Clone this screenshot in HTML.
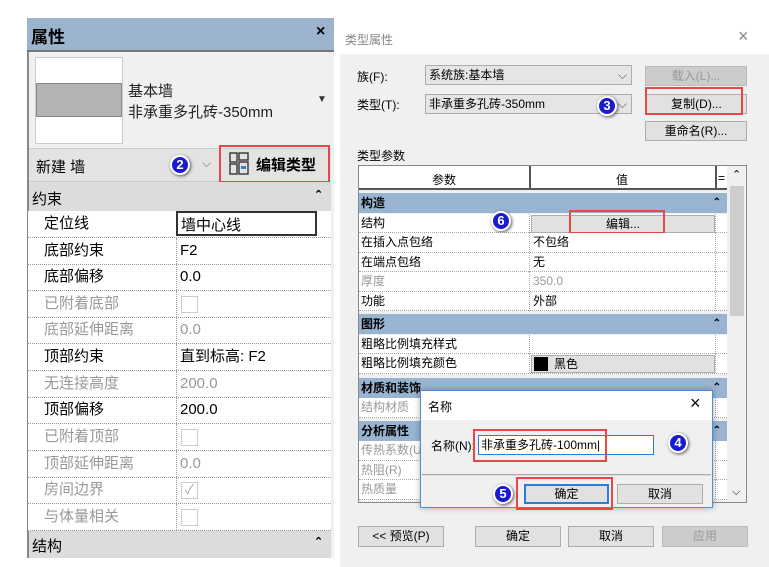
<!DOCTYPE html>
<html><head><meta charset="utf-8"><style>
*{margin:0;padding:0;box-sizing:border-box}
body{width:769px;height:567px;background:#fff;position:relative;overflow:hidden;font-family:"Liberation Sans","Microsoft YaHei","Noto Sans CJK SC",sans-serif;font-size:12px;color:#000}
.a{position:absolute}
.t{position:absolute;white-space:nowrap}
.circ{position:absolute;width:20px;height:20px;border-radius:50%;background:#1a1ad0;border:2px solid #fff;box-shadow:1px 1px 3px #555;color:#fff;font-weight:bold;font-size:13px;text-align:center;line-height:16px}
.red{position:absolute;border:2px solid #e8474a}
.btn{position:absolute;background:#e1e1e1;border:1px solid #adadad;text-align:center;font-size:12px;line-height:18px}
.lrow{position:absolute;left:28px;width:303px;height:27px;border-bottom:1px dotted #999;font-size:15px;line-height:26px}
.lrow .k{position:absolute;left:16px}
.lrow .v{position:absolute;left:148px;border-left:1px dotted #999;height:26px;padding-left:3px;width:141px}
.lrow.g{color:#999}
.cb{position:absolute;left:4px;top:5px;width:17px;height:17px;border:1px solid #ccc;background:#fff}
.trow{position:absolute;left:359px;width:368px;height:19.5px;background:#fff;border-bottom:1px dotted #aaa;font-size:12px;line-height:19px}
.trow .k{position:absolute;left:2px}
.trow .v{position:absolute;left:170px;width:187px;height:19px;border-left:1px dotted #aaa;border-right:1px dotted #aaa;padding-left:3px}
.trow.g{color:#999}
.hdr{position:absolute;left:359px;width:368px;height:20px;background:#99b4d1;font-weight:bold;font-size:12px;line-height:20px;padding-left:2px}
.hdr span{position:absolute;right:6px;font-size:10px}
</style></head><body>

<!-- LEFT PANEL -->
<div class="a" style="left:27px;top:18px;width:307px;height:540px;background:#f0f0f0;border-left:2px solid #888"></div>
<div class="a" style="left:27px;top:18px;width:307px;height:32px;background:#9bb3cd"></div>
<div class="t" style="left:31px;top:23px;font-size:17px;font-weight:bold">属性</div>
<div class="t" style="left:316px;top:23px;font-size:16px;font-weight:bold">×</div>
<div class="a" style="left:27px;top:50px;width:307px;height:2px;background:#777"></div>
<div class="a" style="left:35px;top:57px;width:88px;height:87px;background:#fff;border:1px solid #ccc"></div>
<div class="a" style="left:36px;top:83px;width:86px;height:34px;background:#b4b4b4;border:1px solid #888"></div>
<div class="t" style="left:128px;top:80px;font-size:15px;color:#222">基本墙</div>
<div class="t" style="left:128px;top:101px;font-size:15px;color:#222">非承重多孔砖-350mm</div>
<div class="t" style="left:317px;top:94px;font-size:10px;color:#333">▼</div>
<div class="a" style="left:29px;top:148px;width:302px;height:34px;background:#e3e3e3;border-top:1px solid #ccc;border-bottom:1px solid #ccc"></div>
<div class="t" style="left:36px;top:156px;font-size:15px">新建 墙</div>
<div class="circ" style="left:170px;top:155px">2</div>
<div class="t" style="left:202px;top:156px;font-size:12px;color:#777">⌵</div>
<div class="red" style="left:219px;top:145px;width:111px;height:38px"></div>
<svg class="a" style="left:229px;top:152px" width="22" height="24" viewBox="0 0 22 24"><rect x="1" y="1" width="7" height="9" fill="none" stroke="#333" stroke-width="1.4"/><rect x="1" y="12" width="7" height="10" fill="none" stroke="#333" stroke-width="1.4"/><rect x="10" y="1" width="9" height="7" fill="none" stroke="#333" stroke-width="1.4"/><rect x="10" y="10" width="9" height="12" fill="none" stroke="#333" stroke-width="1.4"/><rect x="12" y="14" width="5" height="3" fill="#3a7bd5"/></svg>
<div class="t" style="left:256px;top:154px;font-size:15px;font-weight:bold">编辑类型</div>
<div class="a" style="left:29px;top:182px;width:302px;height:29px;background:#dcdcdc"></div>
<div class="t" style="left:32px;top:188px;font-size:15px">约束</div>
<div class="t" style="left:314px;top:188px;font-size:11px;font-weight:bold">⌃</div>

<div class="a" style="left:28px;top:211px;width:303px;height:319px;background:#fff"></div>
<div class="lrow" style="top:211px"><span class="k">定位线</span><span class="v" style="border:2px solid #333;height:25px">墙中心线</span></div>
<div class="lrow" style="top:238px"><span class="k">底部约束</span><span class="v">F2</span></div>
<div class="lrow" style="top:264px"><span class="k">底部偏移</span><span class="v">0.0</span></div>
<div class="lrow g" style="top:291px"><span class="k">已附着底部</span><span class="v"><i class="cb"></i></span></div>
<div class="lrow g" style="top:317px"><span class="k">底部延伸距离</span><span class="v">0.0</span></div>
<div class="lrow" style="top:344px"><span class="k">顶部约束</span><span class="v">直到标高: F2</span></div>
<div class="lrow g" style="top:371px"><span class="k">无连接高度</span><span class="v">200.0</span></div>
<div class="lrow" style="top:397px"><span class="k">顶部偏移</span><span class="v">200.0</span></div>
<div class="lrow g" style="top:424px"><span class="k">已附着顶部</span><span class="v"><i class="cb"></i></span></div>
<div class="lrow g" style="top:451px"><span class="k">顶部延伸距离</span><span class="v">0.0</span></div>
<div class="lrow g" style="top:477px"><span class="k">房间边界</span><span class="v"><i class="cb" style="color:#aaa;font-style:normal;font-size:13px;line-height:14px;text-align:center">✓</i></span></div>
<div class="lrow g" style="top:504px"><span class="k">与体量相关</span><span class="v"><i class="cb"></i></span></div>
<div class="a" style="left:29px;top:531px;width:302px;height:27px;background:#dcdcdc"></div>
<div class="t" style="left:32px;top:535px;font-size:15px">结构</div>
<div class="t" style="left:314px;top:535px;font-size:11px;font-weight:bold">⌃</div>

<!-- RIGHT DIALOG -->
<div class="a" style="left:340px;top:54px;width:429px;height:513px;background:#f0f0f0"></div>
<div class="t" style="left:345px;top:31px;font-size:12px;color:#888">类型属性</div>
<div class="t" style="left:738px;top:26px;font-size:18px;color:#888">×</div>
<div class="t" style="left:357px;top:68px">族(F):</div>
<div class="a" style="left:425px;top:65px;width:207px;height:20px;background:#e5e5e5;border:1px solid #adadad;padding-left:3px;line-height:18px">系统族:基本墙<span style="position:absolute;right:4px;color:#555">⌵</span></div>
<div class="btn" style="left:645px;top:66px;width:102px;height:20px;color:#999;background:#ccc;border-color:#bbb">载入(L)...</div>
<div class="t" style="left:357px;top:96px">类型(T):</div>
<div class="a" style="left:425px;top:94px;width:207px;height:20px;background:#e5e5e5;border:1px solid #adadad;padding-left:3px;line-height:18px">非承重多孔砖-350mm<span style="position:absolute;right:4px;color:#555">⌵</span></div>
<div class="circ" style="left:597px;top:96px">3</div>
<div class="btn" style="left:646px;top:94px;width:101px;height:20px">复制(D)...</div>
<div class="red" style="left:645px;top:87px;width:98px;height:28px"></div>
<div class="btn" style="left:645px;top:121px;width:102px;height:20px">重命名(R)...</div>
<div class="t" style="left:357px;top:147px">类型参数</div>

<div class="a" style="left:358px;top:165px;width:389px;height:338px;border:1px solid #888;background:#f0f0f0"></div>
<div class="a" style="left:359px;top:166px;width:368px;height:24px;background:#fff;border-bottom:2px solid #555"></div>
<div class="a" style="left:529px;top:166px;width:2px;height:24px;background:#555"></div>
<div class="a" style="left:715px;top:166px;width:2px;height:24px;background:#555"></div>
<div class="t" style="left:432px;top:171px">参数</div>
<div class="t" style="left:616px;top:171px">值</div>
<div class="t" style="left:718px;top:171px">=</div>
<div class="a" style="left:728px;top:166px;width:18px;height:336px;background:#f0f0f0"></div>
<div class="a" style="left:730px;top:186px;width:14px;height:130px;background:#cdcdcd"></div>
<div class="t" style="left:732px;top:168px;font-size:11px">⌃</div>
<div class="t" style="left:732px;top:486px;font-size:11px">⌵</div>

<div class="hdr" style="top:193px">构造<span>⌃</span></div>
<div class="trow" style="top:213.5px"><span class="k">结构</span><span class="v"></span></div>
<div class="btn" style="left:531px;top:215px;width:184px;height:18px;line-height:16px">编辑...</div>
<div class="red" style="left:569px;top:210px;width:96px;height:24px"></div>
<div class="circ" style="left:491px;top:211px">6</div>
<div class="trow" style="top:233px"><span class="k">在插入点包络</span><span class="v">不包络</span></div>
<div class="trow" style="top:252.5px"><span class="k">在端点包络</span><span class="v">无</span></div>
<div class="trow g" style="top:272px"><span class="k">厚度</span><span class="v">350.0</span></div>
<div class="trow" style="top:291.5px"><span class="k">功能</span><span class="v">外部</span></div>
<div class="hdr" style="top:314px">图形<span>⌃</span></div>
<div class="trow" style="top:334.5px"><span class="k">粗略比例填充样式</span><span class="v"></span></div>
<div class="trow" style="top:354px"><span class="k">粗略比例填充颜色</span><span class="v"></span></div>
<div class="btn" style="left:531px;top:355px;width:184px;height:18px;text-align:left;line-height:16px;padding-left:22px">黑色<i style="position:absolute;left:2px;top:1px;width:14px;height:14px;background:#000"></i></div>
<div class="hdr" style="top:378px">材质和装饰<span>⌃</span></div>
<div class="trow g" style="top:398px"><span class="k">结构材质</span><span class="v"></span></div>
<div class="hdr" style="top:421px">分析属性<span>⌃</span></div>
<div class="trow g" style="top:441px"><span class="k">传热系数(U)</span><span class="v"></span></div>
<div class="trow g" style="top:460.5px"><span class="k">热阻(R)</span><span class="v"></span></div>
<div class="trow g" style="top:480px"><span class="k">热质量</span><span class="v"></span></div>

<div class="btn" style="left:358px;top:526px;width:86px;height:21px">&lt;&lt; 预览(P)</div>
<div class="btn" style="left:475px;top:526px;width:86px;height:21px">确定</div>
<div class="btn" style="left:568px;top:526px;width:86px;height:21px">取消</div>
<div class="btn" style="left:662px;top:526px;width:86px;height:21px;color:#999;background:#ccc;border-color:#bbb">应用</div>

<!-- NAME DIALOG -->
<div class="a" style="left:420px;top:390px;width:293px;height:118px;background:#f0f0f0;border:1px solid #4a90d9;box-shadow:0 0 6px rgba(0,0,0,.3)"></div>
<div class="a" style="left:421px;top:391px;width:291px;height:29px;background:#fff"></div>
<div class="t" style="left:428px;top:398px">名称</div>
<div class="t" style="left:690px;top:393px;font-size:18px">×</div>
<div class="t" style="left:431px;top:437px">名称(N):</div>
<div class="a" style="left:478px;top:435px;width:176px;height:20px;background:#fff;border:1px solid #2a7fd4;padding-left:2px;line-height:18px">非承重多孔砖-100mm|</div>
<div class="red" style="left:473px;top:429px;width:134px;height:33px"></div>
<div class="circ" style="left:668px;top:433px">4</div>
<div class="a" style="left:422px;top:474px;width:289px;height:2px;background:#ddd;border-top:1px solid #aaa"></div>
<div class="btn" style="left:524px;top:484px;width:85px;height:20px;border:2px solid #2a7fd4;line-height:16px">确定</div>
<div class="btn" style="left:617px;top:484px;width:86px;height:20px">取消</div>
<div class="red" style="left:516px;top:477px;width:97px;height:33px"></div>
<div class="circ" style="left:493px;top:484px">5</div>
</body></html>
